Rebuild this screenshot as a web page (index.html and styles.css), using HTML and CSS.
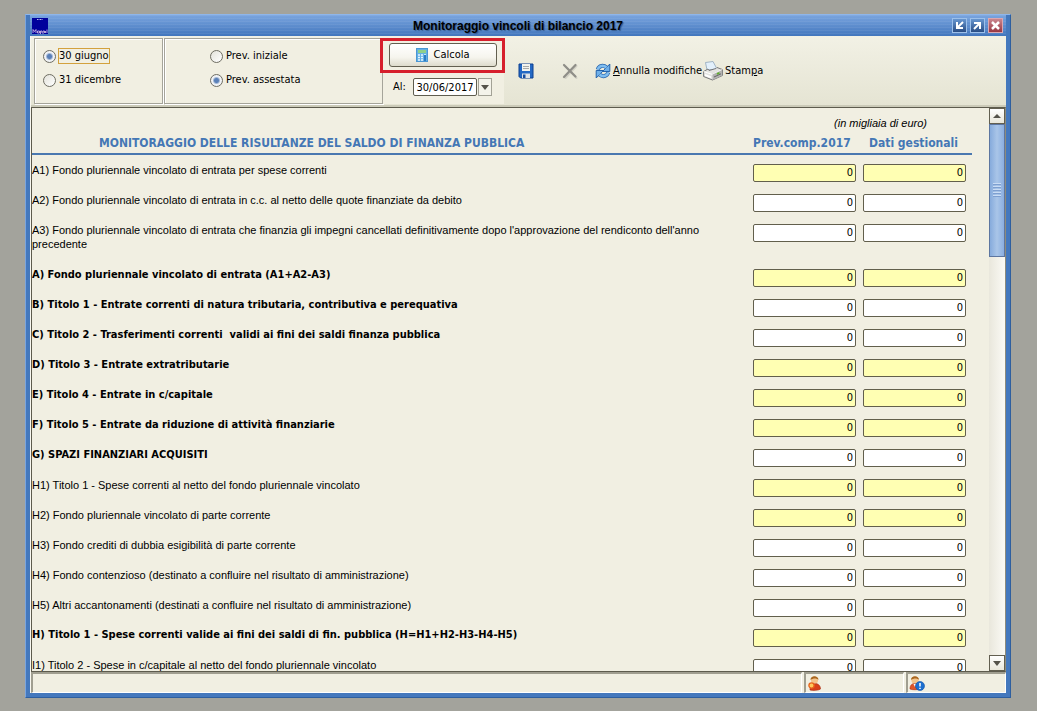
FILE: index.html
```html
<!DOCTYPE html>
<html lang="it">
<head>
<meta charset="utf-8">
<title>Monitoraggio vincoli di bilancio 2017</title>
<link rel="stylesheet" href="styles.css">
</head>
<body>
<main class="window">
  <header class="titlebar">
    <svg class="app-icon" width="16" height="16" viewBox="0 0 16 16" aria-hidden="true">
      <rect width="16" height="16" fill="#00009c"/>
      <path d="M5 1.500h6" stroke="#b9b9ee" stroke-dasharray="1 .5"/>
      <path d="M1 15v-3.500l1.500 2 1.500-2V15M5.500 13h2v2h-2zM8.500 16v-3h1.500v2M11 16v-3h1.500v2M13.500 13v2M15 11.500v3.500" fill="none" stroke="#e4c8ea" stroke-width=".8"/>
    </svg>
    <h1 class="title">Monitoraggio vincoli di bilancio 2017</h1>
    <div class="window-buttons">
      <button class="win-btn" aria-label="Riduci"><svg width="15" height="15" viewBox="0 0 15 15"><path d="M11 4 6 9" stroke="#fff" stroke-width="2"/><path d="M4 4v7h7V9H6V4z" fill="#fff"/></svg></button>
      <button class="win-btn" aria-label="Ingrandisci"><svg width="15" height="15" viewBox="0 0 15 15"><path d="M4 11l5-5" stroke="#fff" stroke-width="2"/><path d="M4 4h7v7H9V6H4z" fill="#fff"/></svg></button>
      <button class="win-btn win-close" aria-label="Chiudi"><svg width="15" height="15" viewBox="0 0 15 15"><path d="M4 4l7 7M11 4l-7 7" stroke="#fff" stroke-width="2.500"/></svg></button>
    </div>
  </header>

  <div class="client">
    <div class="toolbar">
      <fieldset class="group group-date">
        <label class="radio"><input type="radio" name="date" checked><span class="focused">30 giugno</span></label>
        <label class="radio"><input type="radio" name="date"><span>31 dicembre</span></label>
      </fieldset>
      <fieldset class="group group-prev">
        <label class="radio"><input type="radio" name="prev"><span>Prev. iniziale</span></label>
        <label class="radio"><input type="radio" name="prev" checked><span>Prev. assestata</span></label>
      </fieldset>
      <div class="calc">
        <button class="calc-btn">
          <svg width="12" height="14" viewBox="0 0 12 14" aria-hidden="true">
            <rect x=".5" y=".5" width="11" height="13" fill="#64b0e4" stroke="#4a97d4"/>
            <rect x="2" y="2" width="8" height="3" fill="#8fd08a"/>
            <path d="M2 7h8M2 9.500h8M2 12h8" stroke="#e8f6ff" stroke-width="1.500" stroke-dasharray="2 1"/>
            <path d="M8 7h2v6H8z" fill="#2c7cc4"/>
          </svg>
          Calcola
        </button>
        <div class="date-row">
          <label for="al">Al:</label>
          <input id="al" class="date-input" type="text" value="30/06/2017">
          <button class="date-drop" aria-label="Apri calendario"><span class="arrow-down"></span></button>
        </div>
      </div>
      <button class="tool tool-save" aria-label="Salva">
        <svg width="16" height="16" viewBox="0 0 16 16">
          <path d="M1 1h14v14H2.500L1 13.500z" fill="#2368c4" stroke="#0d3f8f"/>
          <path d="M4 1h8v7H4z" fill="#f2f3ee"/>
          <path d="M5 3.500h6M5 5.500h6" stroke="#a7a9a8"/>
          <path d="M4 10.500h8V15H4z" fill="#dfe3e6"/>
          <path d="M5 11.500h2.500V15H5z" fill="#174c9f"/>
        </svg>
      </button>
      <button class="tool tool-delete" aria-label="Elimina">
        <svg width="16" height="16" viewBox="0 0 16 16"><path d="M3.500 3.500 14.500 15M14.500 3 3.500 15" stroke="#d3d2c6" stroke-width="2" stroke-linecap="round"/><path d="M2 2 13.500 13.500M13.500 2 2 14" stroke="#8f8e88" stroke-width="2.200" stroke-linecap="round"/></svg>
      </button>
      <button class="tool tool-undo">
        <svg width="16" height="16" viewBox="0 0 16 16" aria-hidden="true">
          <path d="M2.800 6.500C4 2.500 8.500 1.800 11.500 4.500" fill="none" stroke="#2463ac" stroke-width="4"/>
          <path d="M14.800 1v7.500H7.500z" fill="#6fb0ea" stroke="#2463ac"/>
          <path d="M2.800 6.500C4 2.500 8.500 1.800 11.500 4.500" fill="none" stroke="#7fbdf0" stroke-width="2.600"/>
          <path d="M13.200 9.500c-1.200 4-5.700 4.700-8.700 2" fill="none" stroke="#2463ac" stroke-width="4"/>
          <path d="M1.200 15V7.500h7.300z" fill="#6fb0ea" stroke="#2463ac"/>
          <path d="M13.200 9.500c-1.200 4-5.700 4.700-8.700 2" fill="none" stroke="#7fbdf0" stroke-width="2.600"/>
        </svg>
        <span><u>A</u>nnulla modifiche</span>
      </button>
      <button class="tool tool-print">
        <svg width="20" height="20" viewBox="0 0 20 20" aria-hidden="true">
          <path d="M4 9 2.500 1.500 10 .5l4 7.500z" fill="#e3f0fb" stroke="#8fa6ba" stroke-width=".8"/>
          <path d="M.6 10.500 5 8l1 1.500 7-2 1-1 5.400 2v6L9.500 19 .6 15.500z" fill="#e4e4e1" stroke="#6c6c6e" stroke-width=".9"/>
          <path d="M.8 10.600 9.500 13.500l9.700-4.800" fill="none" stroke="#fff"/>
          <path d="M9.500 13.500V19l9.500-4.500v-5.500z" fill="#b3b3b1"/>
          <path d="M2 13l6 2.300v1.900l-6-2.300z" fill="#fff"/>
          <path d="M11 16l7-3.200" stroke="#666"/>
          <path d="M14 13l2.500-1.200" stroke="#5fb02c" stroke-width="1.600"/>
        </svg>
        <span>Stam<u>p</u>a</span>
      </button>
    </div>

    <div class="scroll-pane">
      <div class="viewport">
        <table class="sheet">
          <colgroup><col><col class="col-prev"><col class="col-dati"></colgroup>
          <thead>
            <tr class="unit"><td></td><td colspan="2">(in migliaia di euro)</td></tr>
            <tr class="heads"><th class="main-head">MONITORAGGIO DELLE RISULTANZE DEL SALDO DI FINANZA PUBBLICA</th><th>Prev.comp.2017</th><th>Dati gestionali</th></tr>
          </thead>
          <tbody id="rows"></tbody>
        </table>
      </div>
      <div class="scrollbar">
        <button class="scroll-btn" aria-label="Scorri su"><span class="arrow-up"></span></button>
        <div class="track"><div class="thumb"><span class="grip"></span></div></div>
        <button class="scroll-btn" aria-label="Scorri giù"><span class="arrow-down"></span></button>
      </div>
    </div>

    <footer class="status">
      <div class="cell cell-main"></div>
      <div class="cell">
        <svg width="16" height="16" viewBox="0 0 16 16" aria-hidden="true">
          <path d="M3 15c0-5 2-6.500 5-6.500s5.500 2 5.500 5.500c-2 1.500-8 1.800-10.500 1z" fill="#d8401c" stroke="#a82c10" stroke-width=".6"/>
          <circle cx="7.500" cy="5" r="3.600" fill="#f3c48c"/>
          <path d="M3.500 5C3.300 0 11.500 0 11.500 5 10 3 6 3 3.500 5z" fill="#a8651f"/>
          <circle cx="4.500" cy="10.500" r="2.600" fill="#ffc85c" stroke="#e8641c" stroke-width="1.300"/>
        </svg>
      </div>
      <div class="cell">
        <svg width="16" height="16" viewBox="0 0 16 16" aria-hidden="true">
          <path d="M1 14c0-4 2-5.500 5-5.500s5 2 5 5.500c-2 1-8 1-10 0z" fill="#e0562a" stroke="#a82c10" stroke-width=".6"/>
          <path d="M4.500 9 6 12l1.500-3z" fill="#fff"/>
          <circle cx="6" cy="5" r="3.600" fill="#f3c48c"/>
          <path d="M2 5C1.800 0 10 0 10 5 8.500 3 4.500 3 2 5z" fill="#a8651f"/>
          <circle cx="11" cy="11" r="4.500" fill="#1c6fd0" stroke="#1354a8" stroke-width=".6"/>
          <path d="M11 8v3.500M11 12.700v1.300" stroke="#fff" stroke-width="1.500"/>
        </svg>
      </div>
    </footer>
  </div>
</main>
<script src="rows.js"></script>
</body>
</html>
```
FILE: rows.js
```js
// [label, bold, computed] - computed fields have a yellow background
const rows = [
  ["A1) Fondo pluriennale vincolato di entrata per spese correnti", false, true],
  ["A2) Fondo pluriennale vincolato di entrata in c.c. al netto delle quote finanziate da debito", false, false],
  ["A3) Fondo pluriennale vincolato di entrata che finanzia gli impegni cancellati definitivamente dopo l'approvazione del rendiconto dell'anno precedente", false, false],
  ["A) Fondo pluriennale vincolato di entrata (A1+A2-A3)", true, true],
  ["B) Titolo 1 - Entrate correnti di natura tributaria, contributiva e perequativa", true, false],
  ["C) Titolo 2 - Trasferimenti correnti  validi ai fini dei saldi finanza pubblica", true, false],
  ["D) Titolo 3 - Entrate extratributarie", true, true],
  ["E) Titolo 4 - Entrate in c/capitale", true, true],
  ["F) Titolo 5 - Entrate da riduzione di attività finanziarie", true, true],
  ["G) SPAZI FINANZIARI ACQUISITI", true, false],
  ["H1) Titolo 1 - Spese correnti al netto del fondo pluriennale vincolato", false, true],
  ["H2) Fondo pluriennale vincolato di parte corrente", false, true],
  ["H3) Fondo crediti di dubbia esigibilità di parte corrente", false, false],
  ["H4) Fondo contenzioso (destinato a confluire nel risultato di amministrazione)", false, false],
  ["H5) Altri accantonamenti (destinati a confluire nel risultato di amministrazione)", false, false],
  ["H) Titolo 1 - Spese correnti valide ai fini dei saldi di fin. pubblica (H=H1+H2-H3-H4-H5)", true, true],
  ["I1) Titolo 2 - Spese in c/capitale al netto del fondo pluriennale vincolato", false, false]
];
const body = document.getElementById("rows");
rows.forEach(([text, bold, computed], i) => {
  const tr = body.insertRow();
  if (bold) tr.classList.add("bold");
  const label = document.createElement("label");
  label.textContent = text;
  label.htmlFor = "prev" + i;
  tr.insertCell().append(label);
  for (const key of ["prev", "dati"]) {
    const input = document.createElement("input");
    input.type = "text";
    input.value = "0";
    input.id = key + i;
    input.className = computed ? "amount computed" : "amount";
    input.setAttribute("aria-label", text);
    tr.insertCell().append(input);
  }
});
```
FILE: styles.css
```css
*, *::before { box-sizing: border-box; }
body {
  margin: 0;
  height: 100vh;
  padding: 14px 26px 13px 25px;
  background: #a3a39c;
  font: 11px/14px "Liberation Sans", sans-serif;
  color: #000;
  overflow: hidden;
}
button, input { font: inherit; color: inherit; margin: 0; padding: 0; }
button { background: none; border: 0; }
svg { display: block; flex: none; }

.window {
  height: 100%;
  display: flex;
  flex-direction: column;
  background: #4478bd;
  border: 1px solid #2e5f9f;
  border-top-color: #8fb6ea;
  border-left-color: #7ba5de;
  padding: 0 4px 4px;
}
.titlebar {
  flex: none;
  height: 21px;
  display: grid;
  grid-template-columns: 1fr auto 1fr;
  align-items: center;
  background: repeating-linear-gradient(to bottom, rgba(255,255,255,.06) 0 1px, transparent 1px 3px), linear-gradient(#7aa5df, #4276bd);
}
.app-icon { margin-left: 2px; }
.title { margin: 0; font: bold 12px/14px "Liberation Sans", sans-serif; color: #000; text-shadow: 1px 1px 1px #34598c; }
.window-buttons { display: flex; justify-content: flex-end; gap: 3px; padding-right: 3px; }
.win-btn { width: 15px; height: 15px; background: linear-gradient(#6c9cd6, #24477f); box-shadow: inset 0 0 0 1px #9dc0ea; }
.win-close { background: linear-gradient(#cf8c94, #94303c); box-shadow: inset 0 0 0 1px #dba7b1; }

.client { flex: 1; min-height: 0; display: flex; flex-direction: column; background: #f1efe2; border-left: 1px solid #f8f7ef; }

.toolbar {
  flex: none;
  height: 71px;
  display: flex;
  align-items: center;
  padding: 2px 0 1px 3px;
  background: linear-gradient(#f2f1e5, #e5e4d3);
  border-bottom: 2px solid #cbcab8;
  font-family: "DejaVu Sans Condensed", sans-serif;
}
.group {
  align-self: stretch;
  margin: 0;
  min-width: 0;
  border: 1px solid #a5a49a;
  box-shadow: inset 1px 1px 0 #fff, 1px 1px 0 #fff;
  background: #f1efe2;
  padding: 10px 0 0 8px;
  display: flex;
  flex-direction: column;
  gap: 10px;
}
.group-date { width: 129px; margin-right: 1px; }
.group-prev { width: 219px; padding-left: 45px; }
.radio { display: flex; align-items: center; gap: 3px; height: 14px; }
.radio input {
  appearance: none;
  width: 13px;
  height: 13px;
  border: 1px solid #6e6d62;
  border-radius: 50%;
  background: linear-gradient(135deg, #e3e2da, #fff);
}
.radio input:checked { background: radial-gradient(circle, #5a80b8 0 2px, #f0f2f5 4px); }
.radio .focused { box-shadow: 0 0 0 1px #d3a13d; }

.calc { align-self: stretch; position: relative; width: 121px; background: #f1efe2; padding: 5px 0 0 6px; }
.calc::before { content: ""; position: absolute; inset: 0 -1px auto -3px; height: 35px; border: 3px solid #d61f2c; pointer-events: none; }
.calc-btn {
  width: 108px;
  height: 24px;
  display: flex;
  align-items: center;
  justify-content: center;
  gap: 5px;
  border: 1px solid #625f50;
  border-radius: 3px;
  background: linear-gradient(#fff, #f6f5ee 60%, #dddbcc);
}
.date-row { display: flex; align-items: center; padding: 11px 0 0 4px; }
.date-row label { width: 20px; }
.date-input { width: 64px; height: 18px; border: 1px solid #5f5d4f; border-radius: 2px; background: #fff; text-align: center; }
.date-drop { width: 14px; height: 18px; margin-left: 1px; border: 1px solid #a3a296; background: #f4f3ea; display: grid; place-items: center; }
.arrow-down { border: 4px solid transparent; border-top: 5px solid #55534a; border-bottom: 0; }
.arrow-up { border: 4px solid transparent; border-bottom: 4px solid #55534a; border-top: 0; }

.tool { display: flex; align-items: center; gap: 3px; white-space: nowrap; }
.tool-save { margin-left: 14px; }
.tool-delete { margin-left: 28px; }
.tool-undo { margin-left: 17px; gap: 2px; }
.tool-print { margin-left: 1px; gap: 2px; }

.scroll-pane { flex: 1; min-height: 0; display: flex; border: 1px solid #5d5b4d; border-right-color: #8d8b7c; }
.viewport { flex: 1; min-width: 0; overflow: hidden; padding-right: 17px; }
.sheet { width: 100%; border-collapse: collapse; table-layout: fixed; }
.sheet td, .sheet th { padding: 0; vertical-align: top; text-align: left; }
.col-prev { width: 110px; }
.col-dati { width: 109px; }
.unit td { height: 25px; }
.sheet .unit td:last-child { font-style: italic; text-align: center; padding: 8px 0 0 36px; }
.sheet .heads th { font: bold 12px/16px "DejaVu Sans Condensed", sans-serif; color: #4477b5; height: 21px; padding-top: 2px; border-bottom: 2px solid #4a78b0; }
.sheet .heads th:last-child { padding-left: 6px; }
.sheet .heads .main-head { padding-left: 67px; }
tbody::before { content: ""; display: table-row; height: 9px; }
tbody tr { height: 30px; }
tbody label { display: block; white-space: pre-wrap; padding-right: 48px; }
tbody tr:nth-child(3) { height: 45px; }
.bold label { font-weight: bold; font-family: "DejaVu Sans Condensed", sans-serif; }
.amount {
  display: block;
  width: 103px;
  height: 18px;
  margin-top: 1px;
  padding: 0 2px 2px;
  border: 1px solid #625f4c;
  border-radius: 2px;
  background: #fff;
  text-align: right;
  font-family: "DejaVu Sans Condensed", sans-serif;
}
.computed { background: #ffffb3; }

.scrollbar { flex: none; width: 16px; display: flex; flex-direction: column; background: linear-gradient(to right, #e9e7dc, #fbfaf5); }
.scroll-btn { flex: none; height: 16px; border: 1px solid #625f50; background: linear-gradient(#fff, #e9e7da); display: grid; place-items: center; }
.track { flex: 1; }
.thumb { height: 25%; border: 1px solid #5d76a0; background: linear-gradient(to right, #86abdc, #a9c5e8, #8aaee0); display: grid; place-items: center; }
.grip { width: 8px; height: 14px; background: repeating-linear-gradient(#c9dcf4 0 1px, #7d9fd0 1px 2px, transparent 2px 3px); }

.status { flex: none; height: 21px; display: flex; gap: 2px; }
.cell { width: 100px; border: 2px solid #a09e90; border-width: 2px 1px 1px 2px; border-right-color: #fff; border-bottom-color: #fff; padding: 1px 1px; }
.cell-main { flex: 1; }
```
